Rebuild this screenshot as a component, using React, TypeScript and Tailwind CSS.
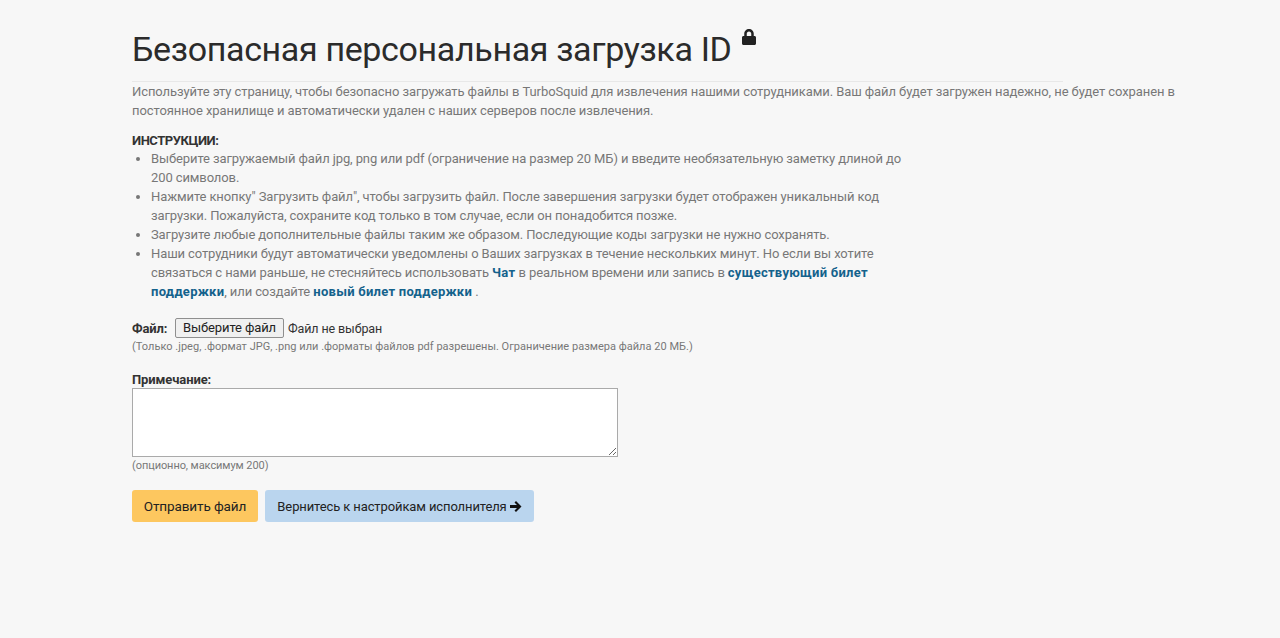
import { FaLock } from "react-icons/fa";

const App = () => {
  return (
    <div className="min-h-[638px] bg-[#f7f7f7] pl-[132px] pr-[100px] pt-[28px] font-['Roboto',sans-serif] text-[13px] leading-[19px] tracking-[-0.11px] text-[#777]">
      <div className="w-[931px] border-b border-[#e8e8e8] pb-[10px]">
        <h1 className="flex h-[43px] items-start text-[34px] leading-[43px] font-normal tracking-[-0.35px] text-[#2b2b2b]">
          Безопасная персональная загрузка ID
          <FaLock className="ml-[9px] mt-[1px] text-[16px] text-[#222]" />
        </h1>
      </div>
      <p className="tracking-[-0.08px]">
        Используйте эту страницу, чтобы безопасно загружать файлы в TurboSquid для извлечения нашими сотрудниками. Ваш файл будет загружен надежно, не будет сохранен в постоянное хранилище и автоматически удален с наших серверов после извлечения.
      </p>
      <div className="mt-[11px] font-bold tracking-[-0.45px] text-[#333]">ИНСТРУКЦИИ:</div>
      <ul className="-mt-[1px] w-[775px] list-disc pl-[19px]">
        <li>Выберите загружаемый файл jpg, png или pdf (ограничение на размер 20 МБ) и введите необязательную заметку длиной до 200 символов.</li>
        <li>Нажмите кнопку" Загрузить файл", чтобы загрузить файл. После завершения загрузки будет отображен уникальный код загрузки. Пожалуйста, сохраните код только в том случае, если он понадобится позже.</li>
        <li>Загрузите любые дополнительные файлы таким же образом. Последующие коды загрузки не нужно сохранять.</li>
        <li>
          Наши сотрудники будут автоматически уведомлены о Ваших загрузках в течение нескольких минут. Но если вы хотите связаться с нами раньше, не стесняйтесь использовать{" "}
          <a className="font-bold tracking-[0.27px] text-[#14628c]">Чат</a> в реальном времени или запись в{" "}
          <a className="font-bold tracking-[0.27px] text-[#14628c]">существующий билет поддержки</a>, или создайте{" "}
          <a className="font-bold tracking-[0.27px] text-[#14628c]">новый билет поддержки</a> .
        </li>
      </ul>
      <div className="mt-[17px] flex h-[20px] items-center">
        <label className="mr-[7px] w-[36px] text-[13px] font-bold text-[#333]">Файл:</label>
        <button className="h-[20px] w-[109px] rounded-[2px] border border-[#8f8f8f] bg-[#f0f0f0] text-[13px] leading-[18px] text-[#222]">Выберите файл</button>
        <span className="ml-[4px] text-[12.5px] text-[#333]">Файл не выбран</span>
      </div>
      <div className="mt-[1px] h-[16px] text-[11px] leading-[16px] tracking-[0.02px] text-[#777]">
        (Только .jpeg, .формат JPG, .png или .форматы файлов pdf разрешены. Ограничение размера файла 20 МБ.)
      </div>
      <div className="mt-[17px] h-[16px] text-[13px] leading-[16px] font-bold text-[#333]">Примечание:</div>
      <textarea className="block h-[69px] w-[486px] border border-[#aaa] bg-white" />
      <div className="mt-[1px] h-[16px] text-[11px] leading-[16px] tracking-[-0.07px] text-[#777]">(опционно, максимум 200)</div>
      <div className="mt-[16px] flex gap-[7px]">
        <button className="h-[32px] w-[126px] rounded-[3px] bg-[#fdc75f] text-[13.5px] text-[#222]">Отправить файл</button>
        <button className="flex h-[32px] w-[269px] items-center justify-center rounded-[3px] bg-[#bad5ee] text-[13px] text-[#222]">
          Вернитесь к настройкам исполнителя
          <svg viewBox="0 0 12 11" className="ml-[3px] h-[11px] w-[12px] fill-[#111]">
            <path d="M0 4h7L4.5 1.5 6 0l5.5 5.5L6 11 4.5 9.500 7 7H0z" />
          </svg>
        </button>
      </div>
    </div>
  );
};

export default App;
